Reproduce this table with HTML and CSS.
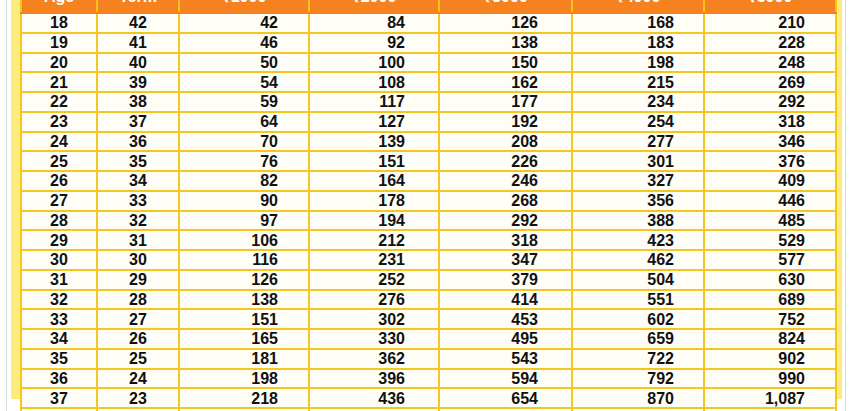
FILE: index.html
```html
<!DOCTYPE html>
<html>
<head>
<meta charset="utf-8">
<link rel="stylesheet" href="styles.css">
</head>
<body>
<div class="page">
  <div class="frame">
    <table class="rates">
      <colgroup>
        <col class="c-age"><col class="c-term"><col class="c-a"><col class="c-b"><col class="c-c"><col class="c-d"><col class="c-e">
      </colgroup>
      <thead>
        <tr><th>Age</th><th>Term</th><th>₹1000</th><th>₹2000</th><th>₹3000</th><th>₹4000</th><th>₹5000</th></tr>
      </thead>
      <tbody>
        <tr><td>18</td><td>42</td><td>42</td><td>84</td><td>126</td><td>168</td><td>210</td></tr>
        <tr><td>19</td><td>41</td><td>46</td><td>92</td><td>138</td><td>183</td><td>228</td></tr>
        <tr><td>20</td><td>40</td><td>50</td><td>100</td><td>150</td><td>198</td><td>248</td></tr>
        <tr><td>21</td><td>39</td><td>54</td><td>108</td><td>162</td><td>215</td><td>269</td></tr>
        <tr><td>22</td><td>38</td><td>59</td><td>117</td><td>177</td><td>234</td><td>292</td></tr>
        <tr><td>23</td><td>37</td><td>64</td><td>127</td><td>192</td><td>254</td><td>318</td></tr>
        <tr><td>24</td><td>36</td><td>70</td><td>139</td><td>208</td><td>277</td><td>346</td></tr>
        <tr><td>25</td><td>35</td><td>76</td><td>151</td><td>226</td><td>301</td><td>376</td></tr>
        <tr><td>26</td><td>34</td><td>82</td><td>164</td><td>246</td><td>327</td><td>409</td></tr>
        <tr><td>27</td><td>33</td><td>90</td><td>178</td><td>268</td><td>356</td><td>446</td></tr>
        <tr><td>28</td><td>32</td><td>97</td><td>194</td><td>292</td><td>388</td><td>485</td></tr>
        <tr><td>29</td><td>31</td><td>106</td><td>212</td><td>318</td><td>423</td><td>529</td></tr>
        <tr><td>30</td><td>30</td><td>116</td><td>231</td><td>347</td><td>462</td><td>577</td></tr>
        <tr><td>31</td><td>29</td><td>126</td><td>252</td><td>379</td><td>504</td><td>630</td></tr>
        <tr><td>32</td><td>28</td><td>138</td><td>276</td><td>414</td><td>551</td><td>689</td></tr>
        <tr><td>33</td><td>27</td><td>151</td><td>302</td><td>453</td><td>602</td><td>752</td></tr>
        <tr><td>34</td><td>26</td><td>165</td><td>330</td><td>495</td><td>659</td><td>824</td></tr>
        <tr><td>35</td><td>25</td><td>181</td><td>362</td><td>543</td><td>722</td><td>902</td></tr>
        <tr><td>36</td><td>24</td><td>198</td><td>396</td><td>594</td><td>792</td><td>990</td></tr>
        <tr><td>37</td><td>23</td><td>218</td><td>436</td><td>654</td><td>870</td><td>1,087</td></tr>
        <tr><td>38</td><td>22</td><td>240</td><td>480</td><td>720</td><td>960</td><td>1,200</td></tr>
      </tbody>
    </table>
  </div>
</div>
</body>
</html>
```
FILE: styles.css
```css
html, body {
  margin: 0;
  padding: 0;
  background: #ffffff;
  overflow: hidden;
}
.page {
  margin-left: 6px;
  width: 840px;
  height: 411px;
  border-left: 1px solid #dcdcdc;
  border-right: 1px solid #dcdcdc;
  padding: 0 3px 0 4px;
  box-sizing: border-box;
  overflow: hidden;
}
.frame {
  background: #fcec7c;
  padding: 0 7px 0 9px;
  height: 100%;
  box-sizing: border-box;
}
.rates {
  width: 815px;
  table-layout: fixed;
  border-collapse: collapse;
  margin-top: -12px;
  font-family: "Liberation Sans", Arial, sans-serif;
  font-weight: bold;
  font-size: 16px;
  color: #111111;
}
.c-age { width: 76px; }
.c-term { width: 82px; }
.c-a { width: 130px; }
.c-b { width: 130px; }
.c-c { width: 133px; }
.c-d { width: 132px; }
.c-e { width: 132px; }
.rates th {
  background: #f5821f;
  color: #ffffff;
  height: 24px;
  padding: 0;
  line-height: 18px;
  vertical-align: top;
  text-align: center;
  border: 2px solid #f5c21c;
  border-top: none;
  border-bottom: 2px solid #f5821f;
}
.rates td {
  background: #fffef6;
  height: 17.75px;
  padding: 0 30px 0 0;
  line-height: 17px;
  text-align: right;
  border: 2px solid #f5c61e;
  overflow: hidden;
  white-space: nowrap;
}
.rates td:nth-child(1), .rates td:nth-child(2) {
  text-align: center;
  padding-right: 0;
}
.rates td:nth-child(4), .rates td:nth-child(5) { padding-right: 33px; }
.rates td:nth-child(6) { padding-right: 29px; }
```
